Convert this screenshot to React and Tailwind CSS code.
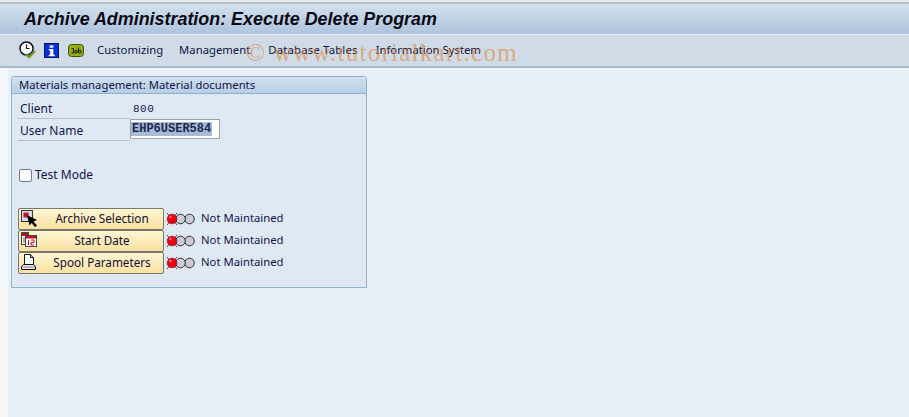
const font = { fontFamily: '"Noto Sans", sans-serif' };

const HistoryIcon = () => (
  <svg width="18" height="19" viewBox="0 0 18 19" className="block">
    <circle cx="7.500" cy="7.500" r="6.500" fill="#fff" stroke="#111" strokeWidth="1.500" />
    <path d="M7.500 3.500v4h3" fill="none" stroke="#111" strokeWidth="1.200" />
    <path d="M7 13l3 3 6-6" fill="none" stroke="#6a9a20" strokeWidth="2.400" />
  </svg>
);

const InfoIcon = () => (
  <svg width="15" height="15" viewBox="0 0 16 16" className="block">
    <rect x="0.500" y="0.500" width="15" height="15" fill="#0a2fd8" stroke="#00105a" />
    <rect x="6" y="2.500" width="4" height="2.500" fill="#fff" />
    <path d="M5 6.500h5v6h1.500v1.500h-6.500v-1.500h1.500v-4.500h-1.500z" fill="#fff" />
  </svg>
);

const JobIcon = () => (
  <svg width="16" height="13" viewBox="0 0 16 13" className="block">
    <rect x="0.500" y="0.500" width="15" height="12" rx="3" fill="#96ad14" stroke="#46520a" />
    <path d="M3.500 4.500h2v4.500h-2M7 6.500h2v2.500h-2zM10.500 3.500v5.500h2.500v-2.500h-2.500" fill="none" stroke="#1d2406" strokeWidth="1" />
  </svg>
);

const SelectIcon = () => (
  <svg width="18" height="18" viewBox="0 0 18 18" className="block">
    <rect x="0.500" y="0.500" width="11" height="11" fill="#d8d8e4" stroke="#333" />
    <rect x="2.500" y="2.500" width="5" height="5" fill="#c8102e" />
    <path d="M6 5l10 5-3.500 1.500 3.500 4-2 1.500-3.500-4-2 2.500z" fill="#000" />
  </svg>
);

const DateIcon = () => (
  <svg width="16" height="15" viewBox="0 0 16 15" className="block">
    <rect x="0.500" y="0.500" width="7" height="12" fill="#fff" stroke="#444" />
    <rect x="1" y="1" width="6" height="3" fill="#b01020" />
    <path d="M2 6h4M2 8h4M2 10h4" stroke="#666" />
    <rect x="4.500" y="3.500" width="11" height="11" fill="#fff" stroke="#444" />
    <rect x="5" y="4" width="10" height="2.500" fill="#c01020" />
    <path d="M7.500 8v5M10 8h3v2.500h-3v2.500h3" fill="none" stroke="#b01020" />
  </svg>
);

const SpoolIcon = () => (
  <svg width="15" height="16" viewBox="0 0 15 16" className="block">
    <path d="M3.500 0.500h6l3 3v7h-9z" fill="#fff" stroke="#111" />
    <path d="M9.500 0.500v3h3" fill="#ccc" stroke="#111" />
    <path d="M2.500 10.500h10l2 2v3h-14v-3z" fill="#e8e8e8" stroke="#111" />
    <path d="M1 13h13" stroke="#888" />
  </svg>
);

const Lights = () => (
  <svg width="29" height="14" viewBox="0 0 29 14" className="block">
    <path d="M1 1l10 12M11 1l-10 12" stroke="#222" strokeWidth="0.800" />
    <circle cx="23.500" cy="7" r="4.800" fill="#c9ccd6" stroke="#333" />
    <circle cx="14.500" cy="7" r="4.800" fill="#c9ccd6" stroke="#333" />
    <circle cx="6" cy="7" r="4.800" fill="#f00010" stroke="#7a0008" strokeWidth="0.600" />
    <circle cx="4.500" cy="5" r="1.200" fill="#ff9090" />
  </svg>
);

const actions = [
  { label: "Archive Selection", Icon: SelectIcon },
  { label: "Start Date", Icon: DateIcon },
  { label: "Spool Parameters", Icon: SpoolIcon },
];

const menus = [
  { label: "Customizing", cls: "mr-[16px]" },
  { label: "Management", cls: "mr-[18px]" },
  { label: "Database Tables", cls: "mr-[18px] tracking-[0.2px]" },
  { label: "Information System", cls: "" },
];

export default function App() {
  return (
    <div className="relative flex h-[417px] w-[909px] flex-col overflow-hidden bg-[#e9f0f8] text-[11.3px] text-[#14144a]" style={font}>
      <div className="h-[4px] border-b-2 border-[#b4bdc9] bg-[#e4e8ef]" />

      {/* title bar */}
      <div className="flex h-[31px] items-center border-b border-[#e6eef5] bg-gradient-to-b from-[#d3e1ee] to-[#adc4dc] pl-[24px]">
        <h1 className="text-[17.9px] font-bold italic text-[#0a0a14]" style={{ fontFamily: '"Liberation Sans", sans-serif' }}>
          Archive Administration: Execute Delete Program
        </h1>
      </div>

      {/* toolbar */}
      <div className="flex h-[33px] items-center border-b-2 border-[#a9b8c6] bg-[#cfdce7] pl-[19px]">
        <HistoryIcon />
        <div className="ml-[7px]"><InfoIcon /></div>
        <div className="ml-[9px] mr-[13px]"><JobIcon /></div>
        <div className="flex">
          {menus.map((m) => (
            <span key={m.label} className={m.cls}>{m.label}</span>
          ))}
        </div>
      </div>

      {/* body */}
      <div className="flex flex-1">
        <div className="w-[8px] bg-[#f5f7fa]" />
        <div className="pl-[3px] pt-[8px]">
          <section className="h-[212px] w-[356px] rounded-t-[3px] border border-[#8fb0d0] bg-[#dfe9f4]">
            <div className="flex h-[17px] items-center border-b border-[#8fb0d0] bg-gradient-to-b from-[#d0e0ef] to-[#b8cfe5] pl-[7px]">
              Materials management: Material documents
            </div>

            <div className="pl-[6px] pt-[5px]">
              <div className="flex h-[20px]">
                <div className="flex w-[112px] items-center border-b border-[#b5c0cc] pl-[2px] text-[12px]">Client</div>
                <div className="flex items-center pl-[3px] text-[11px] tracking-[0.5px]" style={{ fontFamily: '"Liberation Mono", monospace' }}>800</div>
              </div>
              <div className="flex h-[22px]">
                <div className="flex w-[112px] items-center border-b border-[#b5c0cc] pl-[2px] pt-[2px] text-[12px]">User Name</div>
                <div className="flex h-[20px] w-[90px] items-center border border-[#9aa5b0] bg-white">
                  <span className="bg-[#a6bbd6] px-[1px] text-[12px] font-bold leading-[14px] text-[#1c2a50]" style={{ fontFamily: '"Liberation Mono", monospace' }}>
                    EHP6USER584
                  </span>
                </div>
              </div>

              <label className="mt-[25px] flex items-center pl-[1px]">
                <span className="h-[13px] w-[13px] rounded-[2px] border border-[#6f7c8a] bg-white" />
                <span className="ml-[3px] text-[12px]">Test Mode</span>
              </label>

              <div className="mt-[24px] flex flex-col gap-[1px]">
                {actions.map(({ label, Icon }) => (
                  <div key={label} className="flex h-[21px] items-center">
                    <button className="relative flex h-[22px] w-[146px] items-center justify-center rounded-[2px] border border-[#77776a] bg-gradient-to-b from-[#fff6d4] to-[#f8e0a0] text-[11.7px] text-[#101030]">
                      <span className="absolute left-[2px] top-[1px]"><Icon /></span>
                      <span className="pl-[22px]">{label}</span>
                    </button>
                    <div className="ml-[2px]"><Lights /></div>
                    <span className="ml-[6px]">Not Maintained</span>
                  </div>
                ))}
              </div>
            </div>
          </section>
        </div>
      </div>

      {/* watermark sits over the toolbar */}
      <div className="pointer-events-none absolute left-[246px] top-[34px] text-[25px] tracking-[1.25px] text-[#e08a3c] opacity-60" style={{ fontFamily: '"Liberation Serif", serif' }}>
        ©&nbsp;www.tutorialkart.com
      </div>
    </div>
  );
}
